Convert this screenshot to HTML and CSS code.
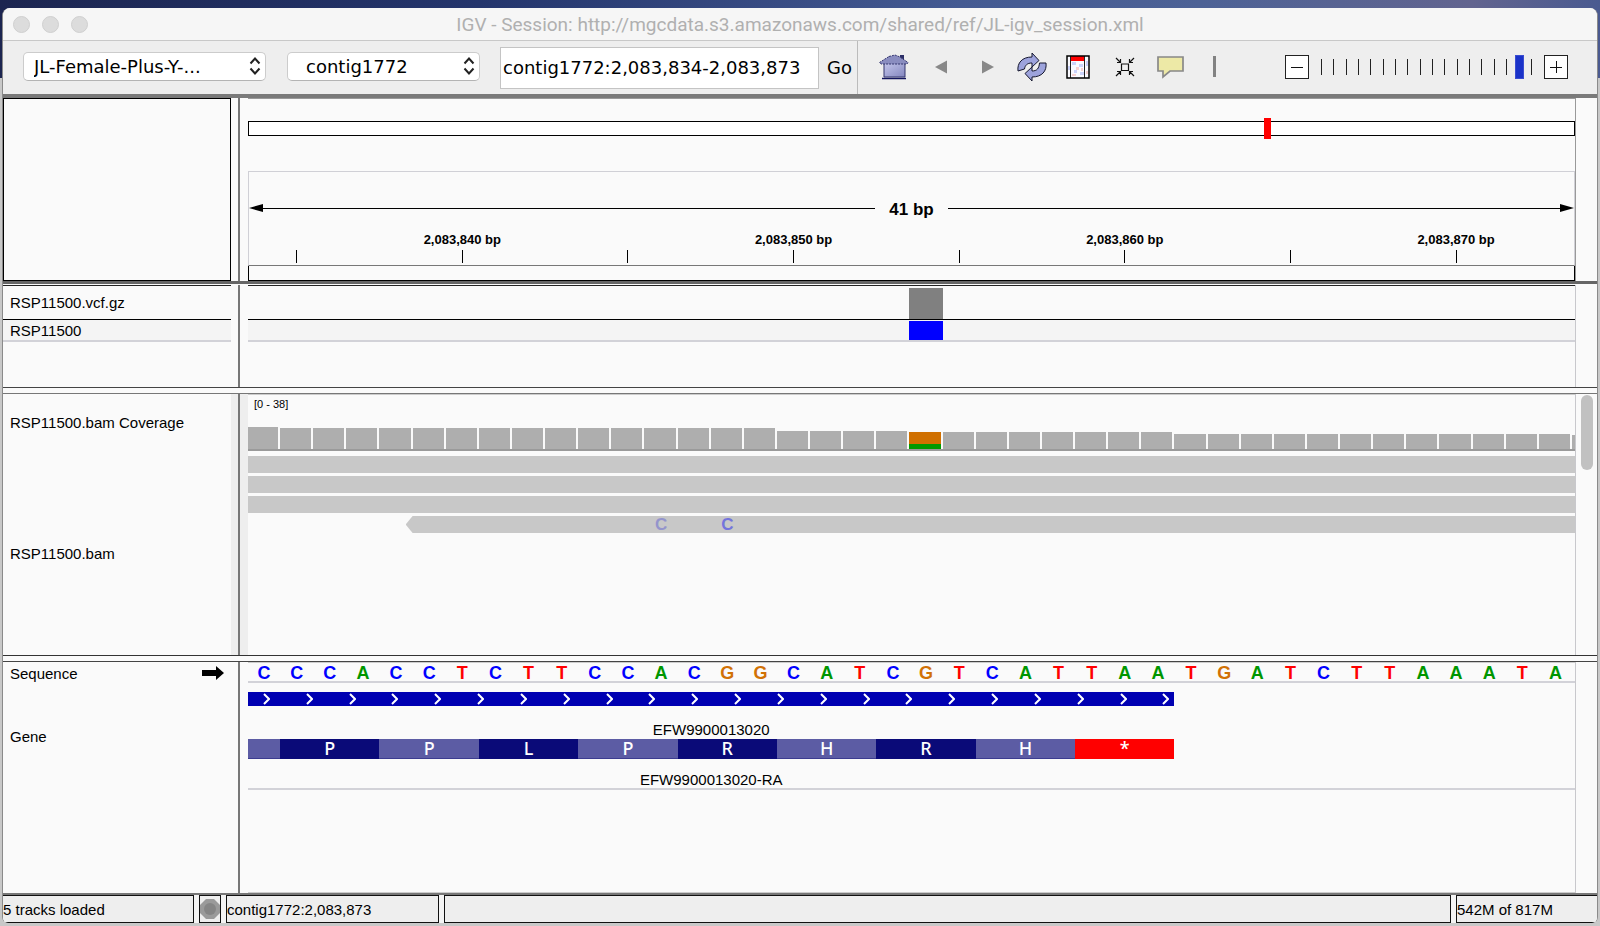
FILE: index.html
```html
<!DOCTYPE html>
<html lang="en">
<head>
    <meta charset="UTF-8">
    <title>IGV - Session</title>
    <link rel="stylesheet" href="styles.css">
</head>
<body>
    <div class="window">
        <div class="titlebar">
            <div class="lights"><span></span><span></span><span></span></div>
            <h1 class="title">IGV - Session: http://mgcdata.s3.amazonaws.com/shared/ref/JL-igv_session.xml</h1>
        </div>

        <div class="toolbar">
            <form class="locus">
                <div class="picker genome">
                    <select aria-label="Genome">
                        <option>JL-Female-Plus-Y-...</option>
                    </select>
                    <svg class="updown" width="12" height="18" viewBox="0 0 12 18"><path d="M1.500 6.500 6 1.500l4.500 5M1.500 11.500l4.500 5 4.500-5"/></svg>
                </div>
                <div class="picker contig">
                    <select aria-label="Chromosome">
                        <option>contig1772</option>
                    </select>
                    <svg class="updown" width="12" height="18" viewBox="0 0 12 18"><path d="M1.500 6.500 6 1.500l4.500 5M1.500 11.500l4.500 5 4.500-5"/></svg>
                </div>
                <input class="search" type="text" aria-label="Locus" value="contig1772:2,083,834-2,083,873">
                <button class="go" type="button">Go</button>
            </form>

            <div class="tools">
                <button class="tool" type="button" aria-label="Home">
                    <svg width="30" height="26" viewBox="0 0 30 26">
                        <defs>
                            <linearGradient id="wall" x1="0" y1="0" x2="1" y2="1">
                                <stop offset="0" stop-color="#c4c6ec"/>
                                <stop offset="1" stop-color="#8386be"/>
                            </linearGradient>
                        </defs>
                        <path d="M21 1h4v8h-4z" fill="#2c2e66"/>
                        <path d="M5 9h21v14H5z" fill="url(#wall)" stroke="#34366f"/>
                        <path d="M10 2.500 16 1l5 2 8 5.500-1 1.500H2L.500 8.500z" fill="#8a8dc0" stroke="#34366f" stroke-dasharray="2 1"/>
                        <path d="M3 24.500h24" stroke="#14165e" stroke-width="1.500"/>
                    </svg>
                </button>
                <button class="tool" type="button" aria-label="Back">
                    <svg width="12" height="14" viewBox="0 0 12 14"><path d="M0 7 12 .500v13z" fill="#888"/></svg>
                </button>
                <button class="tool" type="button" aria-label="Forward">
                    <svg width="12" height="14" viewBox="0 0 12 14"><path d="M12 7 0 .500v13z" fill="#888"/></svg>
                </button>
                <button class="tool" type="button" aria-label="Refresh">
                    <svg width="30" height="30" viewBox="0 0 30 30" fill="#9da3dc" stroke="#15172e" stroke-linejoin="round">
                        <path d="M1 19C0 11 5 5 15 5V1l7 7.500-7 6.500v-4c-5 0-7 2.500-7.500 6z"/>
                        <path d="M29 11c1 8-4 14-14 14v4l-7-7.500L15 15v4c5 0 7-2.500 7.500-8z"/>
                    </svg>
                </button>
                <button class="tool" type="button" aria-label="Region of interest">
                    <svg width="24" height="24" viewBox="0 0 24 24">
                        <path d="M1 1h22v22H1z" fill="#fafaff"/>
                        <path d="M6 7h4v3H6zM13 9h4v3h-4zM8 15h3v3H8zM14 17h4v3h-4zM2 11h2v4H2zM20 6h2v5h-2z" fill="#cbd2fa"/>
                        <path d="M10 12h3v3h-3zM6 19h4v2H6zM15 13h2v3h-2zM20 16h2v3h-2z" fill="#f7d0d0"/>
                        <path d="M5 1h14v5H5z" fill="#f00"/>
                        <path d="M4.500 1v22M18.500 1v22" stroke="#222"/>
                        <path d="M1 1h22v22H1z" fill="none" stroke="#000" stroke-width="1.500"/>
                    </svg>
                </button>
                <button class="tool" type="button" aria-label="Resize tracks to fit window">
                    <svg width="20" height="20" viewBox="0 0 20 20" fill="none" stroke="#111" stroke-width="1.200">
                        <path d="M6.500 7h7v6.500h-7z"/>
                        <path d="M1 1l4.500 4.500M5.500 2v3.500H2M19 1l-4.500 4.500M14.500 2v3.500H18M1 19l4.500-4.500M5.500 18v-3.500H2M19 19l-4.500-4.500M14.500 18v-3.500H18"/>
                    </svg>
                </button>
                <button class="tool" type="button" aria-label="Popup text behavior">
                    <svg width="28" height="24" viewBox="0 0 28 24">
                        <path d="M1 2h25v14H13l-7 6V16H1z" fill="#ede9a6" stroke="#888" stroke-width="1.700"/>
                    </svg>
                </button>
                <span class="divider"></span>
            </div>

            <div class="zoom">
                <button class="zoom-button" type="button" aria-label="Zoom out">
                    <svg width="14" height="14" viewBox="0 0 14 14"><path d="M1 7.500h12"/></svg>
                </button>
                <div class="zoom-slider">
                    <div class="zoom-ticks" id="zoomTicks"></div>
                    <input type="range" min="0" max="17" value="16" aria-label="Zoom level">
                </div>
                <button class="zoom-button" type="button" aria-label="Zoom in">
                    <svg width="14" height="14" viewBox="0 0 14 14"><path d="M1 7.500h12M7.500 1v12"/></svg>
                </button>
            </div>
        </div>

        <!-- ideogram and ruler -->
        <div class="panel header-panel">
            <div class="names attribute-box"></div>
            <div class="gutter"></div>
            <div class="data">
                <div class="ideogram"><span class="ideogram-mark"></span></div>
                <div class="ruler">
                    <div class="span-row">
                        <svg class="arrow" width="14" height="8" viewBox="0 0 14 8"><path d="M0 4 14 0v8z"/></svg>
                        <span class="span-line"></span>
                        <span class="span-label">41 bp</span>
                        <span class="span-line"></span>
                        <svg class="arrow" width="14" height="8" viewBox="0 0 14 8"><path d="M14 4 0 0v8z"/></svg>
                    </div>
                    <div class="bases ruler-labels" id="rulerLabels"></div>
                    <div class="bases ruler-ticks" id="rulerTicks"></div>
                </div>
                <div class="ruler-foot"></div>
            </div>
            <div class="scroll"></div>
        </div>

        <!-- variants -->
        <div class="panel variant-panel">
            <div class="names">
                <div class="track vcf">RSP11500.vcf.gz</div>
                <div class="track sample">RSP11500</div>
            </div>
            <div class="gutter"></div>
            <div class="data">
                <div class="track bases vcf"><span class="variant"></span></div>
                <div class="track bases sample"><span class="genotype"></span></div>
            </div>
            <div class="scroll"></div>
        </div>

        <!-- alignments -->
        <div class="panel alignment-panel">
            <div class="names">
                <div class="track coverage">RSP11500.bam Coverage</div>
                <div class="track fill">RSP11500.bam</div>
            </div>
            <div class="gutter"></div>
            <div class="data">
                <div class="coverage">
                    <div class="range">[0 - 38]</div>
                    <div class="bases bars" id="coverage"></div>
                </div>
                <div class="reads">
                    <div class="read"></div>
                    <div class="read"></div>
                    <div class="read"></div>
                    <div class="bases">
                        <div class="read reverse"></div>
                        <span class="mismatch low">C</span>
                        <span class="mismatch">C</span>
                    </div>
                </div>
            </div>
            <div class="scroll"><span class="scroll-thumb"></span></div>
        </div>

        <!-- sequence and gene -->
        <div class="panel feature-panel">
            <div class="names">
                <div class="track sequence">Sequence
                    <svg width="22" height="14" viewBox="0 0 22 14"><path d="M0 4h14V0l8 7-8 7v-4H0z"/></svg>
                </div>
                <div class="track gene">Gene</div>
            </div>
            <div class="gutter"></div>
            <div class="data">
                <div class="bases sequence" id="sequence"></div>
                <div class="gene">
                    <div class="bases"><div class="exon" id="exon"></div></div>
                    <div class="bases"><div class="gene-name">EFW9900013020</div></div>
                    <div class="bases amino" id="amino"></div>
                    <div class="bases"><div class="gene-name">EFW9900013020-RA</div></div>
                </div>
            </div>
            <div class="scroll"></div>
        </div>

        <div class="status">
            <div class="cell tracks-loaded">5 tracks loaded</div>
            <div class="cell stop">
                <svg width="20" height="20" viewBox="0 0 20 20"><path d="M6 0h8l6 6v8l-6 6H6l-6-6V6z" fill="#9a9a9a"/><circle cx="10" cy="10" r="6" fill="#858585"/></svg>
            </div>
            <div class="cell position">contig1772:2,083,873</div>
            <div class="cell message"></div>
            <div class="cell memory">542M of 817M</div>
        </div>
    </div>
    <script src="app.js"></script>
</body>
</html>
```
FILE: styles.css
```css
* {
    box-sizing: border-box;
}
body {
    margin: 0;
    min-height: 100vh;
    display: flex;
    padding: 8px 2px 3px;
    font-family: "Liberation Sans", Arial, sans-serif;
    font-size: 15px;
    color: #000;
    background: linear-gradient(90deg, #1c2550, #24356c 30%, #445a92 60%, #4d6296 75%, #62648f 92%, #4a5a90) top / 100% 78px no-repeat #c8c8c8;
}
button {
    border: none;
    background: none;
    padding: 0;
    font-family: inherit;
    color: inherit;
}
svg {
    display: block;
}
.window {
    flex: 1;
    min-width: 0;
    display: flex;
    flex-direction: column;
    border: 1px solid #8a8a8a;
    border-top: none;
    border-bottom: none;
    border-radius: 8px 8px 6px 6px;
    background: #fafafa;
    overflow: hidden;
}

/* title bar */
.titlebar {
    display: flex;
    align-items: center;
    height: 33px;
    padding: 0 10px;
    background: #f6f6f6;
    border-bottom: 1px solid #c8c8c8;
}
.lights {
    display: flex;
    gap: 12px;
    width: 75px;
}
.lights span {
    width: 17px;
    height: 17px;
    border-radius: 50%;
    background: #dcdcdc;
    border: 1px solid #cfcfcf;
}
.title {
    flex: 1;
    margin: 0;
    padding-right: 75px;
    font: 400 19px Roboto, sans-serif;
    color: #b0b0b0;
    text-align: center;
    white-space: nowrap;
}

/* toolbar */
.toolbar {
    display: flex;
    align-items: center;
    height: 57px;
    padding-right: 29px;
    background: #eee;
    border-bottom: 4px solid #7a7a7a;
    font-family: "DejaVu Sans", sans-serif;
    font-size: 18px;
}
.locus {
    display: flex;
    align-items: center;
    align-self: stretch;
    padding: 0 5px 0 20px;
    border-right: 1px solid #bbb;
}
.picker {
    position: relative;
    margin-right: 21px;
    padding-bottom: 2px;
}
.picker select {
    appearance: none;
    display: block;
    width: 100%;
    height: 29px;
    padding: 0 30px 0 10px;
    border: 1px solid #ccc;
    border-bottom-color: #b4b4b4;
    border-radius: 5px;
    background: #fff;
    font: inherit;
    color: #000;
}
.genome {
    width: 243px;
}
.contig {
    width: 193px;
    margin-right: 20px;
}
.contig select {
    padding-left: 18px;
}
.updown {
    position: absolute;
    right: 5px;
    top: 5px;
    fill: none;
    stroke: #222;
    stroke-width: 2;
    pointer-events: none;
}
.search {
    width: 319px;
    height: 42px;
    padding: 0 2px;
    border: 1px solid #c4c4c4;
    background: #fff;
    font: inherit;
    color: #000;
}
.go {
    margin-left: 8px;
    font-size: 18px;
}
.tools {
    display: flex;
    align-items: center;
    gap: 23px;
    padding: 0 0 2px 21px;
}
.tool:nth-child(2) {
    margin: 0 12px 0 3px;
}
.tool:nth-child(5) {
    margin-left: -4px;
}
.tool:nth-child(6) {
    margin: 0 -1px 0 2px;
}
.divider {
    width: 3px;
    height: 21px;
    margin-left: 5px;
    background: #828282;
}
.zoom {
    display: flex;
    align-items: center;
    gap: 8px;
    margin-left: auto;
    padding-bottom: 2px;
}
.zoom-button {
    width: 24px;
    height: 24px;
    border: 1px solid #222;
    background: #fff;
}
.zoom-button svg {
    margin: 0 auto;
    fill: none;
    stroke: #111;
}
.zoom-slider {
    position: relative;
    width: 219px;
    height: 24px;
}
.zoom-ticks {
    display: flex;
    justify-content: space-between;
    padding: 4px 4px 0;
}
.zoom-ticks span {
    width: 1px;
    height: 16px;
    background: #222;
}
.zoom-slider input {
    appearance: none;
    position: absolute;
    inset: 0;
    width: 100%;
    height: 24px;
    margin: 0;
    background: none;
}
.zoom-slider input::-webkit-slider-thumb {
    appearance: none;
    width: 9px;
    height: 24px;
    background: #1a32c8;
    border: 1px solid #3a4cd0;
}

/* panels */
.panel {
    display: grid;
    grid-template-columns: 228px 17px minmax(0, 1fr) 21px;
}
.gutter {
    background: linear-gradient(#777, #777) 7px 0 / 2px 100% no-repeat;
}
.data {
    border-right: 1px solid #c8c8cc;
}
.scroll {
    padding: 1px 5px;
}
.scroll-thumb {
    display: block;
    width: 12px;
    height: 75px;
    border-radius: 6px;
    background: #c1c1c1;
}
.names .track {
    display: flex;
    align-items: center;
    padding-left: 7px;
}
/* first and last base are cut by the view edge */
.bases {
    display: grid;
    grid-template-columns: 32fr repeat(39, 33fr) 3fr;
}

.header-panel {
    border-bottom: 3px solid #666;
}
.attribute-box {
    border: 1px solid #000;
}
.header-panel .data {
    border-top: 1px solid #999;
    border-right-color: #999;
    padding-top: 22px;
}
.ideogram {
    position: relative;
    height: 15px;
    background: #fff;
    border: 1px solid #000;
}
.ideogram-mark {
    position: absolute;
    left: 76.6%;
    top: -4px;
    width: 7px;
    height: 21px;
    background: #f00;
}
.ruler {
    margin-top: 35px;
    padding-top: 19px;
    border: 1px solid #d0d0d6;
    border-bottom-color: #777;
}
.ruler .bases {
    margin: 0 -1px;
}
.span-row {
    display: flex;
    align-items: center;
    height: 34px;
}
.span-line {
    flex: 1;
    height: 1px;
    background: #000;
}
.span-label {
    padding: 3px 14px 0;
    font-size: 17px;
    font-weight: bold;
}
.ruler-labels {
    padding-top: 7px;
    font-size: 13px;
    line-height: 16px;
    font-weight: bold;
    text-align: center;
}
.ruler-labels span {
    grid-row: 1;
    white-space: nowrap;
}
.ruler-ticks {
    padding: 2px 0;
    height: 17px;
}
.ruler-ticks span {
    grid-row: 1;
    justify-self: center;
    width: 1px;
    background: #000;
}
.ruler-foot {
    height: 15px;
    border: 1px solid #000;
    border-top: none;
}

.variant-panel {
    height: 104px;
    padding-top: 1px;
    border-bottom: 1px solid #444;
}
.vcf {
    height: 35px;
    border-top: 1px solid #222;
    border-bottom: 1px solid #000;
}
.sample {
    height: 22px;
    background: #f4f4f4;
    border-bottom: 2px solid #d2d2d8;
}
.variant,
.genotype {
    grid-column: 21;
}
.variant {
    margin-top: 2px;
    background: #808080;
}
.genotype {
    margin: 1px 0 0;
    background: #00f;
}

.alignment-panel {
    flex: 264 1 0;
    margin: 5px 0;
    border-top: 1px solid #777;
    border-bottom: 1px solid #333;
}
.alignment-panel .gutter {
    background-color: #eee;
}
.alignment-panel .names {
    display: flex;
    flex-direction: column;
}
.alignment-panel .fill {
    flex: 1;
}
.coverage {
    height: 57px;
}
.data .coverage {
    display: flex;
    flex-direction: column;
    justify-content: space-between;
    border-top: 1px solid #ccc;
    border-bottom: 2px solid #9a9a9a;
}
.range {
    padding: 3px 6px;
    font-size: 11px;
    line-height: 13px;
}
.bars {
    align-items: end;
}
.bar {
    margin-right: 2px;
    background: #aeaeae;
}
.bar:last-child {
    margin-right: 0;
}
.bar.snp {
    background: linear-gradient(to top, #009a00 5px, #d07000 5px);
}
.reads {
    display: grid;
    gap: 3px;
    padding-top: 5px;
}
.read {
    height: 17px;
    background: #c8c8c8;
}
.read.reverse {
    grid-area: 1 / 6 / 2 / -1;
    margin-left: -7px;
    clip-path: polygon(0 50%, 7px 0, 100% 0, 100% 100%, 7px 100%);
}
.mismatch {
    grid-area: 1 / 15;
    z-index: 1;
    font-size: 17px;
    line-height: 17px;
    font-weight: bold;
    text-align: center;
    color: #7474dc;
}
.mismatch.low {
    grid-area: 1 / 13;
    color: #9494cc;
}

.feature-panel {
    flex: 233 1 0;
    border-top: 1px solid #444;
    border-bottom: 2px solid #777;
}
.feature-panel .data {
    border-top: 1px solid #ccc;
    border-bottom: 1px solid #ccc;
}
.feature-panel .names {
    padding-top: 1px;
}
.sequence {
    height: 20px;
}
.names .sequence {
    justify-content: space-between;
    padding-right: 7px;
}
.data .sequence {
    border-bottom: 2px solid #d2d2d8;
    font-size: 18px;
    line-height: 20px;
    font-weight: bold;
    text-align: center;
}
.base-A { color: #009600; }
.base-C { color: #00f; }
.base-G { color: #d17105; }
.base-T { color: #f00; }
.gene {
    height: 107px;
}
.data .gene {
    padding-top: 9px;
    border-bottom: 2px solid #d2d2d8;
}
.exon {
    grid-column: 1 / 29;
    display: flex;
    align-items: center;
    justify-content: space-between;
    height: 14px;
    padding: 0 5px 0 15px;
    background: #0000b2;
}
.exon svg {
    fill: none;
    stroke: #fff;
    stroke-width: 2;
}
.gene-name {
    grid-column: 1 / 29;
    padding-top: 15px;
    line-height: 18px;
    text-align: center;
}
.amino span {
    height: 20px;
    font: 500 18px/19px "Noto Sans", sans-serif;
    text-align: center;
    color: #fff;
    background: #5c5ca4;
    border-bottom: 1px solid #3c3c90;
}
.amino .dark {
    background: #0a0a78;
    border-color: #0a0a78;
}
.amino .stop-codon {
    background: #f00;
    border-color: #f00;
}
.amino + .bases .gene-name {
    padding-top: 12px;
}

/* status bar */
.status {
    display: flex;
    gap: 5px;
    height: 28px;
    background: #f4f4f4;
}
.cell {
    display: flex;
    align-items: center;
    background: #eee;
    border: 1px solid #111;
    white-space: nowrap;
}
.tracks-loaded {
    width: 191px;
    border-left: none;
}
.stop {
    width: 22px;
}
.position {
    width: 213px;
}
.message {
    flex: 1;
}
.memory {
    width: 141px;
    border-right: none;
}
```
FILE: app.js
```js
const sequence = 'CCCACCTCTTCCACGGCATCGTCATTAATGATCTTAAATA';
const aminoAcids = ['P', 'P', 'L', 'P', 'R', 'H', 'R', 'H', '*'];
const variantIndex = 20;

function add(parentId, className, text) {
    const el = document.createElement('span');
    if (className) el.className = className;
    if (text) el.textContent = text;
    document.getElementById(parentId).appendChild(el);
    return el;
}

// zoom levels
for (let i = 0; i < 18; i++) {
    add('zoomTicks');
}

// one tick every 5 bases, a label every 10
for (let i = 0; i < 8; i++) {
    const column = 2 + i * 5;
    add('rulerTicks').style.gridColumn = column;
    if (i % 2 === 1) {
        const position = 2083835 + i * 5;
        const label = add('rulerLabels', '', position.toLocaleString('en-US') + ' bp');
        label.style.gridColumn = `${column - 2} / ${column + 3}`;
    }
}

// read depth in pixels
function depth(i) {
    if (i === 0) return 22;
    if (i < 16) return 21;
    if (i < 20) return 18;
    if (i < 28) return 17;
    if (i < 40) return 15;
    return 14;
}
for (let i = 0; i <= 40; i++) {
    const bar = add('coverage', i === variantIndex ? 'bar snp' : 'bar');
    bar.style.height = depth(i) + 'px';
}

for (const base of sequence) {
    add('sequence', 'base-' + base, base);
}

for (let i = 0; i < 22; i++) {
    document.getElementById('exon').insertAdjacentHTML('beforeend',
        '<svg width="7" height="12" viewBox="0 0 7 12"><path d="M1 1l5 5-5 5"/></svg>');
}

// codons are three bases wide, the first one is cut off
add('amino');
aminoAcids.forEach((letter, i) => {
    const kind = letter === '*' ? 'stop-codon' : i % 2 === 0 ? 'dark' : '';
    add('amino', kind, letter).style.gridColumn = `${2 + i * 3} / span 3`;
});
```
